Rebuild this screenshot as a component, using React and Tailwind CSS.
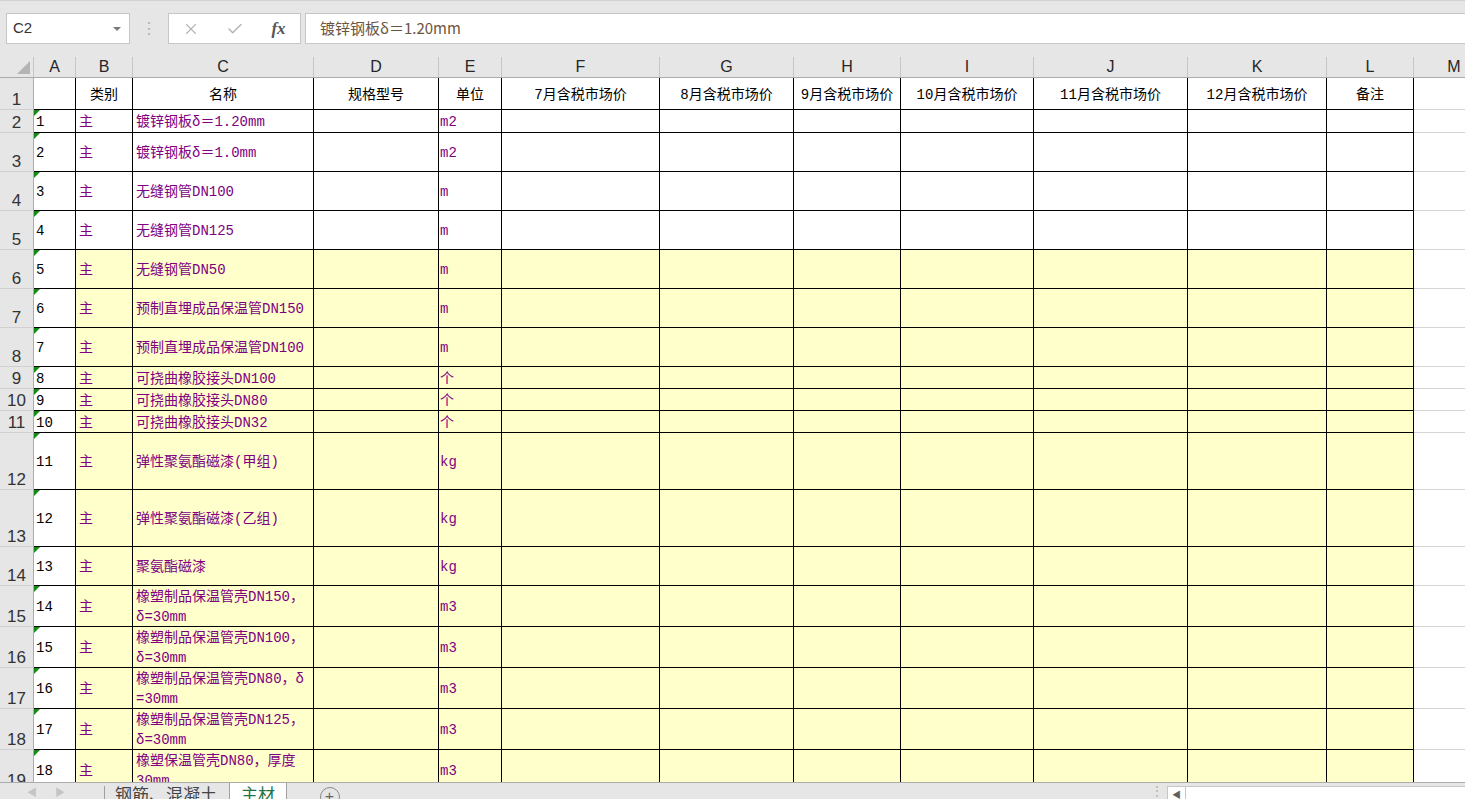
import React from 'react';
import { X, Check } from 'lucide-react';

const COLS = [
  { key: 'A', w: 'w-[42px]' },
  { key: 'B', w: 'w-[57px]' },
  { key: 'C', w: 'w-[181px]' },
  { key: 'D', w: 'w-[125px]' },
  { key: 'E', w: 'w-[63px]' },
  { key: 'F', w: 'w-[158px]' },
  { key: 'G', w: 'w-[134px]' },
  { key: 'H', w: 'w-[107px]' },
  { key: 'I', w: 'w-[133px]' },
  { key: 'J', w: 'w-[154px]' },
  { key: 'K', w: 'w-[139px]' },
  { key: 'L', w: 'w-[87px]' },
];

const HEAD = ['', '类别', '名称', '规格型号', '单位', '7月含税市场价', '8月含税市场价', '9月含税市场价', '10月含税市场价', '11月含税市场价', '12月含税市场价', '备注'];

const ROWS = [
  { n: 2, h: 'h-[23px]', no: '1', name: '镀锌钢板δ＝1.20mm', unit: 'm2' },
  { n: 3, h: 'h-[39px]', no: '2', name: '镀锌钢板δ＝1.0mm', unit: 'm2' },
  { n: 4, h: 'h-[39px]', no: '3', name: '无缝钢管DN100', unit: 'm' },
  { n: 5, h: 'h-[39px]', no: '4', name: '无缝钢管DN125', unit: 'm' },
  { n: 6, h: 'h-[39px]', no: '5', name: '无缝钢管DN50', unit: 'm', y: true },
  { n: 7, h: 'h-[39px]', no: '6', name: '预制直埋成品保温管DN150', unit: 'm', y: true },
  { n: 8, h: 'h-[39px]', no: '7', name: '预制直埋成品保温管DN100', unit: 'm', y: true },
  { n: 9, h: 'h-[22px]', no: '8', name: '可挠曲橡胶接头DN100', unit: '个', y: true },
  { n: 10, h: 'h-[22px]', no: '9', name: '可挠曲橡胶接头DN80', unit: '个', y: true },
  { n: 11, h: 'h-[22px]', no: '10', name: '可挠曲橡胶接头DN32', unit: '个', y: true },
  { n: 12, h: 'h-[57px]', no: '11', name: '弹性聚氨酯磁漆(甲组)', unit: 'kg', y: true },
  { n: 13, h: 'h-[57px]', no: '12', name: '弹性聚氨酯磁漆(乙组)', unit: 'kg', y: true },
  { n: 14, h: 'h-[39px]', no: '13', name: '聚氨酯磁漆', unit: 'kg', y: true },
  { n: 15, h: 'h-[41px]', no: '14', name: '橡塑制品保温管壳DN150，\nδ=30mm', unit: 'm3', y: true },
  { n: 16, h: 'h-[41px]', no: '15', name: '橡塑制品保温管壳DN100，\nδ=30mm', unit: 'm3', y: true },
  { n: 17, h: 'h-[41px]', no: '16', name: '橡塑制品保温管壳DN80，δ\n=30mm', unit: 'm3', y: true },
  { n: 18, h: 'h-[41px]', no: '17', name: '橡塑制品保温管壳DN125，\nδ=30mm', unit: 'm3', y: true },
  { n: 19, h: 'h-[41px]', no: '18', name: '橡塑保温管壳DN80，厚度\n30mm', unit: 'm3', y: true },
];

const cellFont = "font-['Liberation_Mono','Noto_Sans_CJK_SC',monospace] text-[14px]";

function RowHeader({ n }) {
  return (
    <div className="w-[34px] shrink-0 bg-[#e6e6e6] border-r border-[#ababab] border-b border-b-[#d0d0d0] flex items-end justify-center pb-[1px] text-[17px] leading-none text-[#333] font-['Liberation_Sans',sans-serif]">
      {n}
    </div>
  );
}

function DataRow({ r }) {
  const bg = r.y ? 'bg-[#ffffcc]' : 'bg-white';
  return (
    <div className={`flex shrink-0 ${r.h}`}>
      <RowHeader n={r.n} />
      <div className={`${COLS[0].w} shrink-0 relative bg-white border-r border-b border-black flex items-center pt-[3px] pl-[2px] text-black ${cellFont}`}>
        <span className="absolute left-0 top-0 w-0 h-0 border-t-[6px] border-t-[#138a13] border-r-[6px] border-r-transparent" />
        {r.no}
      </div>
      <div className={`${COLS[1].w} shrink-0 ${bg} border-r border-b border-black flex items-center pt-[3px] pl-[3px] text-[#800080] ${cellFont}`}>主</div>
      <div className={`${COLS[2].w} shrink-0 ${bg} border-r border-b border-black flex items-center pt-[2px] pl-[3px] text-[#800080] whitespace-pre-line leading-[20px] ${cellFont}`}>{r.name}</div>
      <div className={`${COLS[3].w} shrink-0 ${bg} border-r border-b border-black`} />
      <div className={`${COLS[4].w} shrink-0 ${bg} border-r border-b border-black flex items-center pt-[3px] pl-[1px] text-[#800080] ${cellFont}`}>{r.unit}</div>
      {COLS.slice(5).map((c) => (
        <div key={c.key} className={`${c.w} shrink-0 ${bg} border-r border-b border-black`} />
      ))}
      <div className="w-[80px] shrink-0 bg-white border-b border-[#d4d4d4]" />
    </div>
  );
}

export default function App() {
  return (
    <div className="w-[1465px] h-[799px] overflow-hidden bg-[#e6e6e6] flex flex-col border-t border-[#d2d2d2] font-['Liberation_Sans','Noto_Sans_CJK_SC',sans-serif]">
      {/* formula bar */}
      <div className="h-[56px] shrink-0 flex items-start pt-[12px] pl-[6px]">
        <div className="w-[124px] h-[31px] bg-white border border-[#c6c6c6] flex items-center justify-between pl-[6px] pr-[8px]">
          <span className="text-[15px] text-[#333]">C2</span>
          <span className="w-0 h-0 border-l-[4px] border-r-[4px] border-t-[4px] border-l-transparent border-r-transparent border-t-[#7a7a7a]" />
        </div>
        <div className="w-[38px] h-[31px] flex items-center justify-center text-[#b0b0b0] text-[16px] leading-none">⋮</div>
        <div className="w-[133px] h-[31px] bg-white border border-[#c6c6c6] flex items-center">
          <div className="w-[44px] flex justify-center"><X size={18} strokeWidth={1.5} className="text-[#b4b4b4]" /></div>
          <div className="w-[44px] flex justify-center"><Check size={18} strokeWidth={2} className="text-[#b4b4b4]" /></div>
          <div className="flex-1 flex justify-center font-['Liberation_Serif',serif] italic font-bold text-[17px] text-[#555]">fx</div>
        </div>
        <div className="ml-[4px] flex-1 h-[31px] bg-white border border-r-0 border-[#c6c6c6] flex items-center pl-[14px] text-[15px] text-[#6b5440] font-['Noto_Sans_CJK_SC','Liberation_Sans',sans-serif]">
          镀锌钢板δ＝1.20mm
        </div>
      </div>

      {/* column headers */}
      <div className="h-[21px] shrink-0 flex border-b border-[#ababab]">
        <div className="w-[34px] shrink-0 border-r border-[#c6c6c6] relative">
          <span className="absolute right-[3px] bottom-[3px] w-0 h-0 border-l-[13px] border-l-transparent border-b-[13px] border-b-[#b4b4b4]" />
        </div>
        {COLS.map((c) => (
          <div key={c.key} className={`${c.w} shrink-0 border-r border-[#c6c6c6] flex items-center justify-center text-[16px] text-[#262626]`}>{c.key}</div>
        ))}
        <div className="w-[80px] shrink-0 flex items-center justify-center text-[16px] text-[#262626]">M</div>
      </div>

      {/* grid */}
      <div className="flex-1 flex flex-col overflow-hidden">
        <div className="flex shrink-0 h-[32px]">
          <RowHeader n={1} />
          {COLS.map((c, i) => (
            <div key={c.key} className={`${c.w} shrink-0 bg-white border-r border-b border-black flex items-center justify-center pt-[3px] text-black ${cellFont}`}>{HEAD[i]}</div>
          ))}
          <div className="w-[80px] shrink-0 bg-white border-b border-[#d4d4d4]" />
        </div>
        {ROWS.map((r) => (
          <DataRow key={r.n} r={r} />
        ))}
      </div>

      {/* sheet tabs */}
      <div className="h-[17px] shrink-0 border-t border-[#ababab] flex items-stretch overflow-hidden">
        <div className="w-[104px] flex items-start pt-[2px] text-[#c4c4c4] text-[10px]">
          <span className="ml-[27px]">◀</span>
          <span className="ml-[18px]">▶</span>
        </div>
        <div className="w-px bg-[#a0a0a0] mt-[3px]" />
        <div className="w-[124px] pl-[10px] pt-[1px] text-[17px] leading-[20px] text-[#444] font-['Noto_Sans_CJK_SC',sans-serif]">钢筋、混凝土</div>
        <div className="w-[58px] bg-white border-l border-r border-[#a0a0a0] flex justify-center pt-[1px] text-[17px] leading-[20px] text-[#217346] font-['Noto_Sans_CJK_SC',sans-serif]">主材</div>
        <div className="w-[85px] flex justify-center pt-[4px]">
          <span className="w-[20px] h-[20px] rounded-full border border-[#8a8a8a] flex items-start justify-center text-[#666] text-[16px] leading-[18px]">+</span>
        </div>
        <div className="flex-1" />
        <div className="w-[20px] text-[#b0b0b0] text-[12px] leading-[17px] text-center">⋮</div>
        <div className="w-[298px] mt-[3px] bg-white border-l border-t border-[#c6c6c6] flex">
          <div className="w-[18px] border-r border-[#c6c6c6] flex justify-center pt-[2px] text-[#606060] text-[9px]">◀</div>
        </div>
      </div>
    </div>
  );
}
